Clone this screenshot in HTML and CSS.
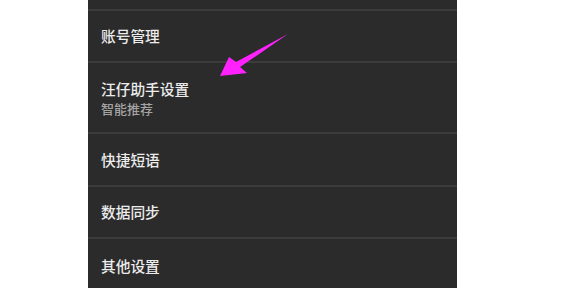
FILE: index.html
```html
<!DOCTYPE html>
<html lang="zh-CN">
<head>
<meta charset="utf-8">
<link rel="stylesheet" href="styles.css">
</head>
<body>
<div class="page">
  <div class="panel">
    <div class="stub"></div>
    <div class="row r1"><div class="title">账号管理</div></div>
    <div class="row r2">
      <div class="title">汪仔助手设置</div>
      <div class="sub">智能推荐</div>
    </div>
    <div class="row r3"><div class="title">快捷短语</div></div>
    <div class="row r4"><div class="title">数据同步</div></div>
    <div class="row r5"><div class="title">其他设置</div></div>
  </div>
  <svg class="arrow" width="586" height="288" viewBox="0 0 586 288">
    <polygon points="288,34 236,62 229,57 220,76 247,73 240,67" fill="#ff22ff"/>
  </svg>
</div>
</body>
</html>
```
FILE: styles.css
```css
html, body {
  margin: 0;
  padding: 0;
  background: #ffffff;
}
.page {
  position: relative;
  width: 586px;
  height: 288px;
  overflow: hidden;
  font-family: "Noto Sans CJK SC", "Noto Sans", sans-serif;
}
.panel {
  margin-left: 88px;
  width: 369px;
  height: 288px;
  background: #2b2b2b;
  display: flex;
  flex-direction: column;
}
.stub {
  height: 9px;
  flex: none;
}
.row {
  flex: none;
  border-top: 2px solid #3c3c3c;
  box-sizing: border-box;
  padding-left: 13px;
  display: flex;
  flex-direction: column;
  justify-content: center;
}
.r1 { height: 52px; }
.r2 { height: 71px; padding-top: 1px; }
.r3 { height: 53px; }
.r4 { height: 52px; }
.r5 { height: 60px; padding-bottom: 4px; }
.title {
  color: #ececec;
  font-size: 14.7px;
  font-weight: 500;
  line-height: 20px;
}
.sub {
  color: #a4a4a4;
  font-size: 13px;
  font-weight: 500;
  line-height: 18px;
  margin-top: 1px;
}
.arrow {
  position: absolute;
  left: 0;
  top: 0;
}
```
